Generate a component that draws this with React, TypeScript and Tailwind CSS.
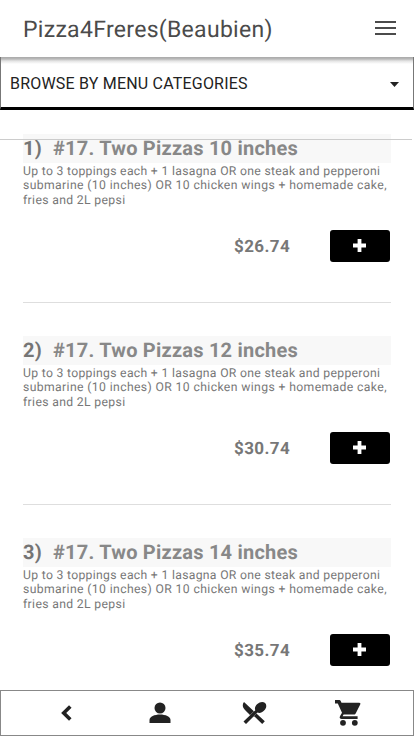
import React from 'react';

interface MenuItem {
  id: number;
  title: string;
  price: string;
}

const menuItems: MenuItem[] = [
  { id: 1, title: '#17. Two Pizzas 10 inches', price: '$26.74' },
  { id: 2, title: '#17. Two Pizzas 12 inches', price: '$30.74' },
  { id: 3, title: '#17. Two Pizzas 14 inches', price: '$35.74' }
];

function MenuCard({ item }: { item: MenuItem }) {
  return (
    <article className="h-[202px] shrink-0">
      <h2 className="flex h-[29px] items-center whitespace-pre bg-[#f8f8f8] text-[20px] leading-[27px] font-bold tracking-[0.22px] text-[#888888]">
        <span className="w-[30px] text-[#757575]">{item.id})</span>
        <span>{item.title}</span>
      </h2>
      <p className="pt-[0.8px] text-[12.2px] leading-[14.4px] whitespace-nowrap text-[#777777]">
        <span className="block tracking-[0.31px]">Up to 3 toppings each + 1 lasagna OR one steak and pepperoni</span>
        <span className="block tracking-[0.38px]">submarine (10 inches) OR 10 chicken wings + homemade cake,</span>
        <span className="block tracking-[0.35px]">fries and 2L pepsi</span>
      </p>
      <div className="mt-[23px] flex h-[32px] items-center justify-end pr-px">
        <span className="w-[96px] pt-[3px] text-[17px] font-bold tracking-[0.4px] text-[#777777]">{item.price}</span>
        <button aria-label="Add to cart" className="flex h-[32px] w-[60px] items-center justify-center rounded-[3px] bg-black pr-0.5">
          <svg width="13" height="13" viewBox="0 0 13 13" fill="#fff" className="-mt-px">
            <path d="M4.600 0h3.800v4.600H13v3.800H8.400V13H4.600V8.400H0V4.600h4.600z" />
          </svg>
        </button>
      </div>
      <div className="mt-[40px] h-px bg-[#dedede]" />
    </article>
  );
}

export default function App() {
  return (
    <div className="relative flex h-[736px] w-[414px] flex-col overflow-hidden bg-white font-['Roboto',sans-serif] [text-rendering:geometricPrecision]">
      <header className="flex h-[57px] shrink-0 items-center justify-between pr-[18px] pl-[23px]">
        <h1 className="pt-[3px] text-[23px] tracking-[0.3px] text-[#4b4b4b]">Pizza4Freres(Beaubien)</h1>
        <button aria-label="Menu">
          <svg width="21" height="14" viewBox="0 0 21 14" fill="#4b4b4b" className="-mt-0.5">
            <path d="M0 0h21v2H0zM0 6h21v2H0zM0 12h21v2H0z" />
          </svg>
        </button>
      </header>

      {/* Category selector */}
      <button className="flex h-[53px] shrink-0 items-center justify-between border-x border-b-[3px] border-x-[#777777] border-b-black bg-[linear-gradient(to_bottom,#a9a9a9_0,#b9b9b9_2px,#e4e4e4_4px,#ffffff_7px)] pt-[4px] pr-[14px] pl-[9px] text-[16px] tracking-[0.2px] text-[#222222]">
        <span>BROWSE BY MENU CATEGORIES</span>
        <svg width="9" height="5" viewBox="0 0 9 5" fill="#222222">
          <path d="M0 0h9L4.500 5z" />
        </svg>
      </button>

      <main className="flex min-h-0 flex-1 flex-col overflow-hidden px-[23px] pt-[24px]">
        {menuItems.map((item) => (
          <MenuCard key={item.id} item={item} />
        ))}
      </main>
      <div className="absolute top-[139px] left-0 h-px w-[412px] bg-[#cccccc]" />

      <nav className="flex h-[46px] shrink-0 items-center border border-[#888888] bg-white px-[18px] text-[#222222]">
        <button aria-label="Back" className="flex w-[94px] justify-center">
          <svg width="11" height="16" viewBox="0 0 11 16" fill="none" stroke="currentColor" strokeWidth="3.600">
            <path d="M9.300 1.500 2.700 8 9.300 14.500" />
          </svg>
        </button>
        <button aria-label="Account" className="flex w-[94px] justify-center">
          <svg width="22" height="22" viewBox="0 0 22 22" fill="currentColor">
            <circle cx="11" cy="6" r="5.500" />
            <path d="M.5 21v-3c0-3.300 5-5.500 10.500-5.500S21.500 14.700 21.500 18v3z" />
          </svg>
        </button>
        <button aria-label="Menu" className="flex w-[94px] justify-center">
          <svg width="25" height="24" viewBox="0 0 25 24" fill="currentColor">
            <path d="M2 1 22.800 20.300 20.200 23 12.500 15.500 9.500 15.500 3 9C.5 6.500 0 3.500 2 1z" />
            <path d="M15.500 11.500 4 23l-2.500-2.500L13.300 9.300c-1-2 0-4.500 2-6.300 2.600-2.500 6-2.700 7.800-1s1.600 5-1 7.500c-1.900 2-4.500 3-6.600 2z" stroke="#fff" strokeWidth=".6" paintOrder="stroke" />
          </svg>
        </button>
        <button aria-label="Cart" className="flex w-[94px] justify-center">
          <svg width="26" height="26" viewBox="0 0 26 26" fill="currentColor">
            <path d="M0 0h4.300c.7 0 1.100.4 1.400 1l.8 1.800h17.700c1.100 0 1.500.8 1 1.800l-4.400 8.600c-.4.800-.9 1.300-1.900 1.300H8.600l-1 1.700h15v2.800H6.800c-2 0-2.700-1.400-1.700-3L7 12.800 2.800 3.500H0z" />
            <circle cx="8" cy="22.800" r="2.900" />
            <circle cx="19.800" cy="22.800" r="2.900" />
          </svg>
        </button>
      </nav>
    </div>
  );
}
